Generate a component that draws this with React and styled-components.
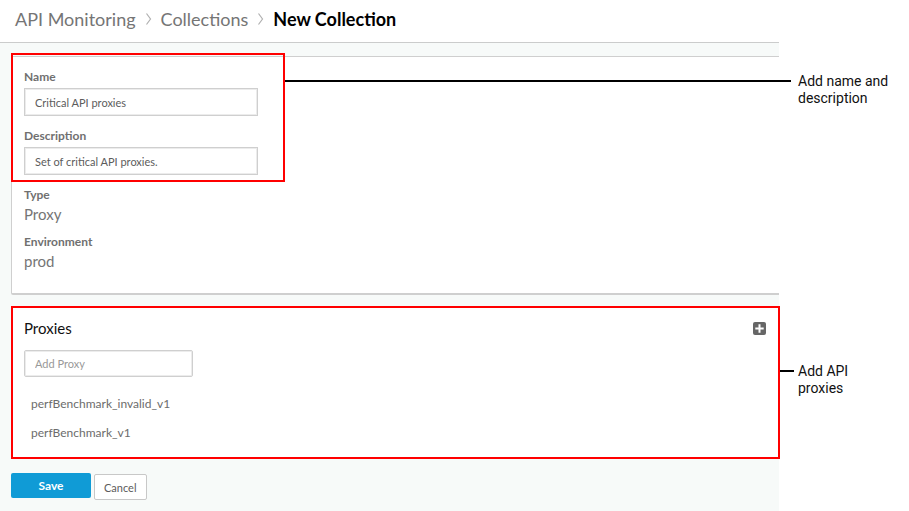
import React from "react";
import styled, { createGlobalStyle } from "styled-components";

const proxies = ["perfBenchmark_invalid_v1", "perfBenchmark_v1"];

export default function App() {
  return (
    <>
      <GlobalStyle />
      <Page>
        <Pane>
          <Header>
            <Breadcrumbs aria-label="Breadcrumb">
              <Crumb href="#monitoring">API Monitoring</Crumb>
              <Chevron />
              <Crumb href="#collections">Collections</Crumb>
              <Chevron />
              <Current>New Collection</Current>
            </Breadcrumbs>
          </Header>

          <Form onSubmit={(e) => e.preventDefault()}>
            <Details>
              <Field>
                <Label htmlFor="name">Name</Label>
                <TextInput id="name" defaultValue="Critical API proxies" />
              </Field>
              <Field>
                <Label htmlFor="description">Description</Label>
                <TextInput
                  id="description"
                  defaultValue="Set of critical API proxies."
                />
              </Field>
              <Facts>
                <Term>Type</Term>
                <Value>Proxy</Value>
                <Term>Environment</Term>
                <Value>prod</Value>
              </Facts>
              <FieldsHighlight />
              <FieldsLeader />
            </Details>

            <Proxies>
              <ProxiesHeader>
                <Title>Proxies</Title>
                <AddButton type="button" aria-label="Add proxy">
                  <svg width="13" height="13" viewBox="0 0 13 13">
                    <rect width="13" height="13" rx="2" fill="#666" />
                    <path d="M6.5 2.3v8.4M2.3 6.5h8.4" stroke="#fff" strokeWidth="2" />
                  </svg>
                </AddButton>
              </ProxiesHeader>
              <ProxyInput placeholder="Add Proxy" aria-label="Add Proxy" />
              <ProxyList>
                {proxies.map((proxy) => (
                  <li key={proxy}>{proxy}</li>
                ))}
              </ProxyList>
              <ProxiesHighlight />
              <ProxiesLeader />
            </Proxies>

            <Actions>
              <SaveButton type="submit">Save</SaveButton>
              <CancelButton type="button">Cancel</CancelButton>
            </Actions>
          </Form>
        </Pane>

        <Notes>
          <Note>Add name and description</Note>
          <Note>
            Add API
            <br />
            proxies
          </Note>
        </Notes>
      </Page>
    </>
  );
}

function Chevron() {
  return (
    <svg width="7" height="12" viewBox="0 0 7 12" aria-hidden="true">
      <path d="M1.5 0.5L5.5 6L1.5 11.5" fill="none" stroke="#b0b0b0" strokeWidth="1.2" />
    </svg>
  );
}

const GlobalStyle = createGlobalStyle`
  * {
    box-sizing: border-box;
  }

  body {
    margin: 0;
    background: #fff;
    font-family: Lato, "Liberation Sans", sans-serif;
  }
`;

const Page = styled.div`
  display: grid;
  grid-template-columns: minmax(0, 1fr) 130px;
  min-height: 100vh;
`;

const Pane = styled.main`
  display: flex;
  flex-direction: column;
  background: #f7faf9;
`;

const Header = styled.header`
  padding: 7px 15px 11px;
  background: #fff;
  border-bottom: 1px solid #cbcccc;
`;

const Breadcrumbs = styled.nav`
  display: flex;
  align-items: center;
  gap: 9px;
  font-size: 18px;
  line-height: 24px;
`;

const Crumb = styled.a`
  color: #757575;
  text-decoration: none;
`;

const Current = styled.span`
  color: #000;
  font-weight: 700;
`;

const Form = styled.form`
  padding: 13px 0 11px 11px;
`;

const Card = styled.section`
  position: relative;
  background: #fff;
`;

const Details = styled(Card)`
  padding: 12px;
  border: 1px solid #cfcfcf;
  border-right: none;
  border-bottom-width: 2px;
  border-radius: 2px 0 0 2px;
`;

const Field = styled.div`
  display: flex;
  flex-direction: column;
  gap: 3px;
  width: 234px;
  margin-bottom: 12px;
`;

const Label = styled.label`
  color: #707070;
  font-size: 12px;
  font-weight: 700;
  line-height: 16px;
`;

const TextInput = styled.input`
  height: 28px;
  padding: 0 10px;
  border: 1px solid #cfcfcf;
  box-shadow: inset 0 0 0 1px #ececec;
  color: #5c5c5c;
  background: #fff;
  font-family: inherit;
  font-size: 11px;
`;

const Facts = styled.dl`
  margin: 0;
`;

const Term = styled.dt`
  color: #707070;
  font-size: 12px;
  font-weight: 700;
  line-height: 16px;
`;

const Value = styled.dd`
  margin: 0 0 8px;
  color: #757575;
  font-size: 15px;
  line-height: 23px;
`;

const Proxies = styled(Card)`
  margin-top: 11px;
  padding: 12px 13px;
`;

const ProxiesHeader = styled.div`
  display: flex;
  align-items: center;
  justify-content: space-between;
`;

const Title = styled.h2`
  margin: 0;
  color: #111;
  font-size: 15px;
  font-weight: 400;
  line-height: 20px;
`;

const AddButton = styled.button`
  display: flex;
  padding: 0;
  border: none;
  background: none;
  cursor: pointer;
`;

const ProxyInput = styled(TextInput)`
  display: block;
  width: 169px;
  height: 27px;
  margin-top: 12px;
  border-radius: 2px;

  &::placeholder {
    color: #999;
    opacity: 1;
  }
`;

const ProxyList = styled.ul`
  margin: 12px 0 0;
  padding: 0 7px;
  color: #6c6c6c;
  font-size: 12px;
  line-height: 29px;
  list-style: none;
`;

const Highlight = styled.div`
  position: absolute;
  border: 2px solid #f00;
  pointer-events: none;
`;

const FieldsHighlight = styled(Highlight)`
  top: -4px;
  left: -1px;
  width: 274px;
  height: 129px;
`;

const ProxiesHighlight = styled(Highlight)`
  inset: 0 -1px 0 0;
`;

const Leader = styled.div`
  position: absolute;
  height: 2px;
  background: #000;
`;

const FieldsLeader = styled(Leader)`
  top: 23px;
  left: 273px;
  right: -12px;
`;

const ProxiesLeader = styled(Leader)`
  top: 64px;
  left: 100%;
  width: 14px;
  margin-left: 1px;
`;

const Actions = styled.div`
  display: flex;
  gap: 3px;
  margin-top: 14px;
`;

const Button = styled.button`
  border-radius: 2px;
  font-family: inherit;
  font-size: 11px;
  cursor: pointer;
`;

const SaveButton = styled(Button)`
  width: 80px;
  height: 25px;
  border: none;
  color: #fff;
  background: #109bd6;
  font-size: 12px;
  font-weight: 700;
`;

const CancelButton = styled(Button)`
  height: 26px;
  margin-top: 1px;
  padding: 0 9px;
  border: 1px solid #c8c8c8;
  color: #5c5c5c;
  background: #fff;
`;

const Notes = styled.aside`
  display: flex;
  flex-direction: column;
  gap: 256px;
  padding: 73px 10px 0 19px;
`;

const Note = styled.p`
  margin: 0;
  color: #111;
  font-family: Roboto, "Liberation Sans", sans-serif;
  font-size: 14px;
  line-height: 17px;
`;
